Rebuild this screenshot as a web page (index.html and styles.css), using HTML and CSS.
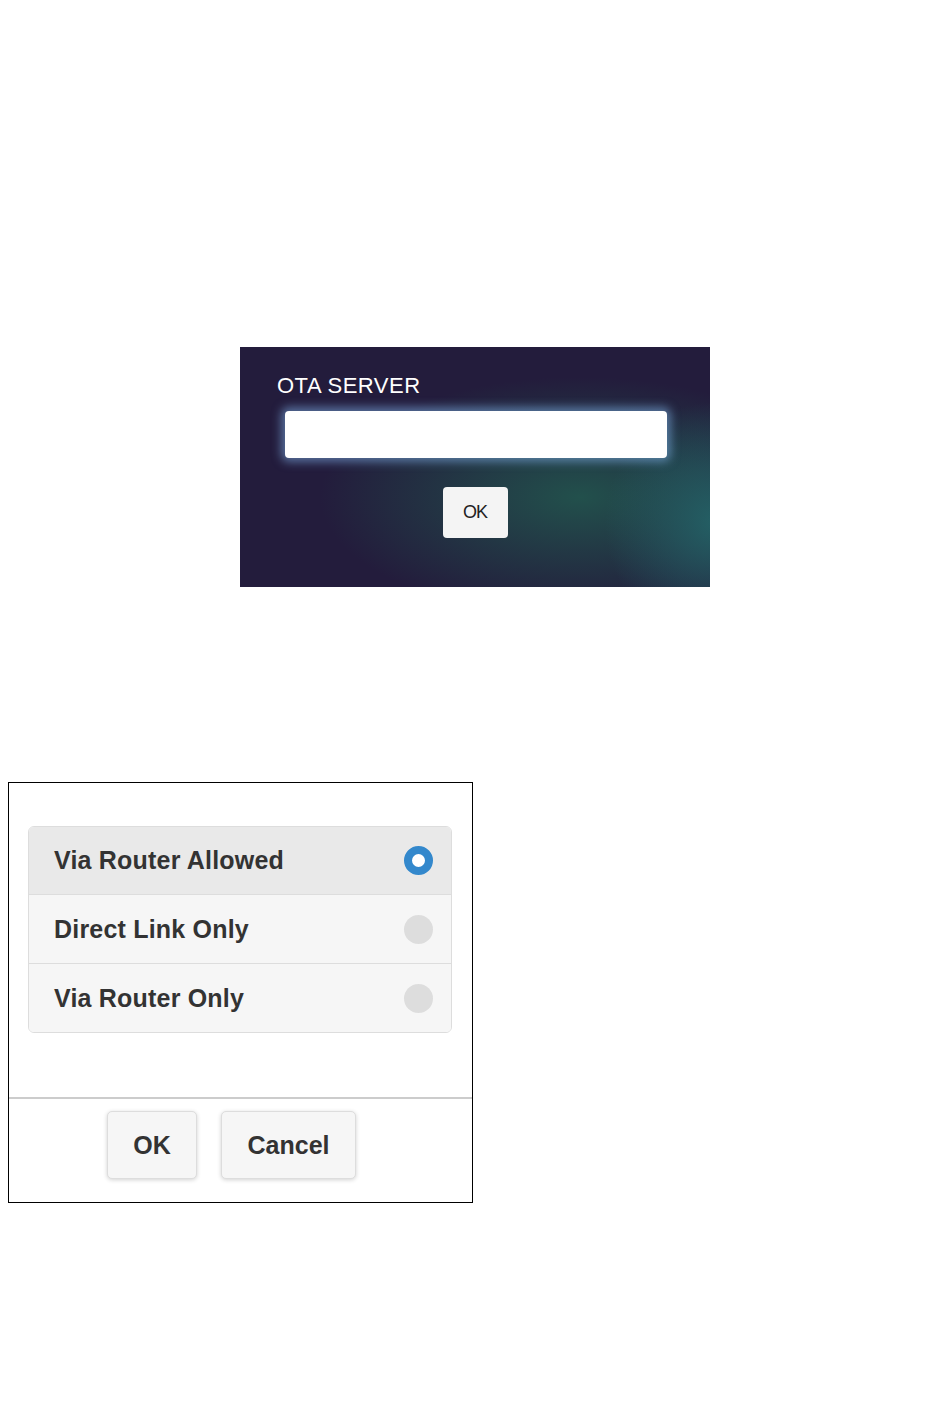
FILE: index.html
```html
<!DOCTYPE html>
<html lang="en">
<head>
    <meta charset="UTF-8">
    <meta name="viewport" content="width=device-width, initial-scale=1.0">
    <title>Connection Settings</title>
    <link rel="stylesheet" href="styles.css">
</head>
<body>

    <div class="ota-panel">
        <label for="otaServer" class="ota-label">OTA SERVER</label>
        <input type="text" id="otaServer" class="ota-input">
        <div class="ota-actions">
            <button class="ota-ok">OK</button>
        </div>
    </div>

    <div class="link-dialog">
        <div class="dialog-body">
            <ul class="choice-list">
                <li class="choice active">
                    <span>Via Router Allowed</span>
                    <span class="radio on"></span>
                </li>
                <li class="choice">
                    <span>Direct Link Only</span>
                    <span class="radio"></span>
                </li>
                <li class="choice">
                    <span>Via Router Only</span>
                    <span class="radio"></span>
                </li>
            </ul>
        </div>
        <div class="dialog-footer">
            <button class="dlg-btn ok">OK</button>
            <button class="dlg-btn cancel">Cancel</button>
        </div>
    </div>

</body>
</html>
```

FILE: styles.css
```css
body {
    margin: 0;
    padding: 347px 0 0 0;
    font-family: "Liberation Sans", Arial, sans-serif;
    background: #fff;
}

/* OTA server panel */
.ota-panel {
    width: 470px;
    height: 240px;
    margin-left: 240px;
    box-sizing: border-box;
    padding: 26px 0 0 37px;
    background:
        radial-gradient(ellipse 110px 120px at 475px 175px, rgba(36, 100, 104, 0.9), rgba(36, 100, 104, 0) 100%),
        radial-gradient(ellipse 260px 120px at 340px 150px, rgba(34, 80, 76, 1), rgba(34, 80, 76, 0) 100%),
        linear-gradient(180deg, #231c3c 0%, #231c3c 100%);
}
.ota-label {
    display: block;
    color: #fff;
    font-size: 22px;
    letter-spacing: 0.5px;
    line-height: 26px;
}
.ota-input {
    display: block;
    width: 382px;
    height: 47px;
    margin: 12px 0 0 8px;
    box-sizing: border-box;
    border: none;
    border-radius: 4px;
    background: #fff;
    box-shadow: 0 0 10px 4px rgba(130, 180, 235, 0.55);
    outline: none;
}
.ota-actions {
    width: 382px;
    margin-left: 8px;
    margin-top: 29px;
    display: flex;
    justify-content: center;
}
.ota-ok {
    width: 65px;
    height: 51px;
    border: none;
    border-radius: 4px;
    background: #f4f4f4;
    color: #222;
    font-family: "Liberation Sans", Arial, sans-serif;
    font-size: 18px;
    letter-spacing: -1px;
    padding: 0;
    margin-left: -2px;
}

/* connection dialog */
.link-dialog {
    width: 465px;
    height: 421px;
    margin: 195px 0 0 8px;
    box-sizing: border-box;
    border: 1px solid #000;
    display: flex;
    flex-direction: column;
}
.dialog-body {
    padding: 43px 20px 0 19px;
    height: 314px;
    box-sizing: border-box;
}
.choice-list {
    list-style: none;
    margin: 0;
    padding: 0;
    border: 1px solid #ddd;
    border-radius: 6px;
    overflow: hidden;
}
.choice {
    display: flex;
    align-items: center;
    justify-content: space-between;
    height: 68px;
    padding: 0 18px 0 25px;
    background: #f6f6f6;
    border-top: 1px solid #ddd;
    color: #333;
    font-size: 25px;
    font-weight: bold;
    letter-spacing: 0.2px;
}
.choice:first-child {
    border-top: none;
    height: 67px;
}
.choice.active {
    background: #e9e9e9;
}
.radio {
    width: 29px;
    height: 29px;
    border-radius: 50%;
    background: #dddddd;
    box-sizing: border-box;
}
.radio.on {
    background: #fff;
    border: 8px solid #3388cc;
}
.dialog-footer {
    border-top: 2px solid #cccccc;
    padding: 12px 0 0 98px;
    display: flex;
    gap: 24px;
}
.dlg-btn {
    height: 68px;
    border: 1px solid #dddddd;
    border-radius: 5px;
    background: #f6f6f6;
    color: #333;
    font-family: "Liberation Sans", Arial, sans-serif;
    font-size: 25px;
    font-weight: bold;
    box-shadow: 0 1px 4px rgba(0, 0, 0, 0.18);
    padding: 0;
}
.dlg-btn.ok {
    width: 90px;
}
.dlg-btn.cancel {
    width: 135px;
}
```
